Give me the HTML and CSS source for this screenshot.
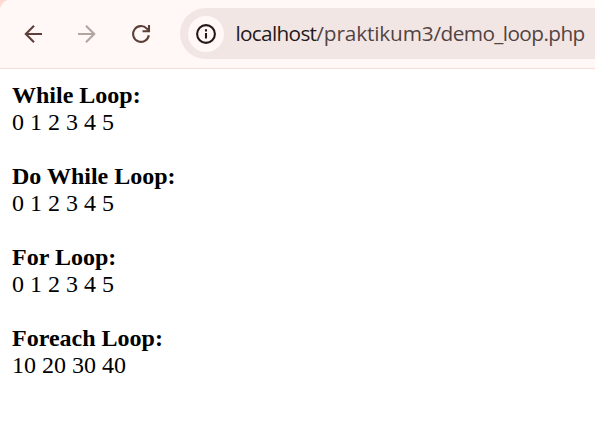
FILE: index.html
```html
<!DOCTYPE html>
<html lang="id">
<head>
<meta charset="utf-8">
<title>demo_loop.php</title>
<link rel="stylesheet" href="styles.css">
</head>
<body>
<div class="frame">
<header class="toolbar">
<nav class="nav">
<svg class="icon" viewBox="0 0 20 20"><path d="M19 10H3M11 1.8L2.8 10L11 18.2"/></svg>
<svg class="icon disabled" viewBox="0 0 20 20"><path d="M1 10H17M9 1.8L17.2 10L9 18.2"/></svg>
<svg class="icon" viewBox="0 0 20 20"><path d="M17.8 11.3A7.9 7.9 0 1 1 15.8 4.6L18 6.8M18 1V7.3H11.5"/></svg>
</nav>
<div class="address">
<span class="info"><svg class="icon" viewBox="0 0 20 20"><circle cx="10" cy="10" r="8.9"/><path d="M10 9V14.5M10 5.3V7.4"/></svg></span>
<span class="url"><span class="host">localhost</span><span class="folder">/praktikum3</span><span class="file">/demo_loop.php</span></span>
</div>
</header>
<main class="page">
<section><h2>While Loop:</h2><p>0 1 2 3 4 5</p></section>
<section><h2>Do While Loop:</h2><p>0 1 2 3 4 5</p></section>
<section><h2>For Loop:</h2><p>0 1 2 3 4 5</p></section>
<section><h2>Foreach Loop:</h2><p>10 20 30 40</p></section>
</main>
</div>
</body>
</html>
```
FILE: styles.css
```css
* { box-sizing: border-box; }
body { margin: 0; background: #ffd9d1; overflow: hidden; }
.frame { height: 436px; background: #fff; border-top-left-radius: 10px; overflow: hidden; }
.toolbar { height: 69px; display: flex; align-items: flex-start; padding: 8px 0 0 23px; background: #fff8f6; border-bottom: 1px solid #f8dcd7; }
.nav { display: flex; gap: 34px; width: 157px; flex: none; padding-top: 16px; }
.icon { width: 20px; height: 20px; fill: none; stroke: #5d4039; stroke-width: 2.1; flex: none; }
.disabled { stroke: #b3a5a1; }
.address { flex: 1; height: 51px; border-radius: 26px 0 0 26px; background: #f2e6e5; display: flex; align-items: center; padding-left: 8px; }
.info { width: 36px; height: 36px; border-radius: 50%; background: #fff8f6; display: flex; align-items: center; justify-content: center; flex: none; margin-right: 11.5px; }
.info .icon { stroke: #231918; }
.url { font: 20.8px/30px "Open Sans", sans-serif; color: #534341; white-space: nowrap; padding-bottom: 2px; }
.host { color: #231918; letter-spacing: -0.7px; }
.folder { letter-spacing: -0.15px; }
.file { letter-spacing: -0.6px; }
.page { padding: 13px 12px; font: 24px/27px "Liberation Serif", serif; color: #000; }
section { margin-bottom: 27px; }
h2, p { margin: 0; font-size: inherit; line-height: inherit; }
```
